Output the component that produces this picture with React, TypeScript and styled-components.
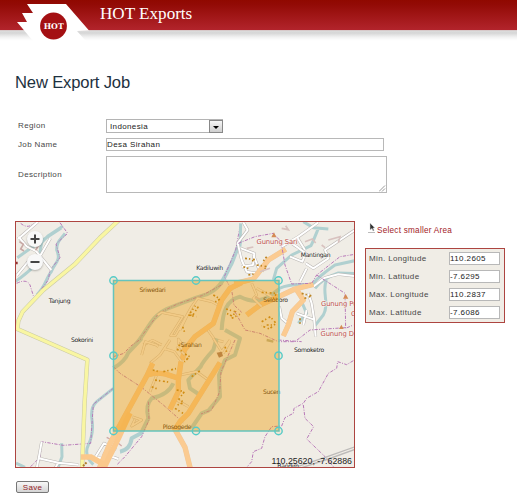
import React from 'react';
import styled, { createGlobalStyle } from 'styled-components';

const Global = createGlobalStyle`
  * { box-sizing: border-box; }
  html, body { margin: 0; padding: 0; background: #fff; overflow: hidden; }
  body { font-family: "Liberation Sans", Arial, sans-serif; font-size: 8px; color: #484848; }
`;

const Page = styled.div`
  width: 517px;
  height: 499px;
  overflow: hidden;
`;

const Header = styled.header`
  height: 41px;
  display: flex;
  align-items: flex-start;
  background:
    linear-gradient(#900800 0, #920a05 4px, #b2242c 30px) 0 0 / 100% 30px no-repeat,
    linear-gradient(#d2b8b8 0, #dcdcdc 1px, #d6d6d6 3px, #f1f1f1 7px, #fdfdfd 10px, #fff 11px) 0 30px / 100% 11px no-repeat;
`;

const Logo = styled.svg`
  width: 100px;
  height: 41px;
  flex: none;
`;

const Brand = styled.div`
  font: 17.1px/20px "Liberation Serif", "Times New Roman", serif;
  color: #fff;
  padding-top: 4px;
`;

const Title = styled.h1`
  margin: 31px 0 0 15px;
  font-size: 16.6px;
  line-height: 22px;
  font-weight: 400;
  color: #1d3140;
  letter-spacing: -0.15px;
`;

const Form = styled.div`
  margin: 25px 0 0 18px;
  display: grid;
  grid-template-columns: 88px 280px;
  grid-template-rows: 14px 13px 37px;
  row-gap: 5px;
  align-items: center;
`;

const Label = styled.label`
  font-size: 8px;
  line-height: 10px;
  letter-spacing: 0.36px;
  color: #484848;
  white-space: nowrap;
`;

const Select = styled.div`
  width: 117px;
  height: 14px;
  border: 1px solid #b4b4b4;
  display: flex;
  justify-content: space-between;
  align-items: center;
  padding-left: 3px;
  letter-spacing: 0.36px;
  color: #222;
`;

const Arrow = styled.span`
  width: 14px;
  height: 13px;
  margin-right: -1px;
  border: 1px solid #888;
  background: linear-gradient(#f6f6f6, #cfcfcf);
  display: flex;
  align-items: center;
  justify-content: center;
  &::after {
    content: '';
    margin-top: 3px;
    border: 3px solid transparent;
    border-top-color: #000;
    border-bottom: 0;
  }
`;

const Field = styled.input<{ $w: number }>`
  appearance: none;
  width: ${(p) => p.$w}px;
  height: 13px;
  border: 1px solid #b8b8b8;
  border-radius: 0;
  padding: 0;
  background: #fff;
  font: 8px/10px "Liberation Sans", Arial, sans-serif;
  letter-spacing: 0.4px;
  color: #222;
  outline: 0;
`;

const AreaBox = styled.div`
  width: 281px;
  height: 37px;
  border: 1px solid #b8b8b8;
  display: flex;
  justify-content: flex-end;
  align-items: flex-end;
`;

const Main = styled.main`
  display: flex;
  margin: 28px 0 0 15px;
`;

const MapFrame = styled.div`
  width: 340px;
  height: 247px;
  border: 1px solid #ad4540;
  background: #f0ede6;
  position: relative;
  flex: none;
`;

const MapSvg = styled.svg`
  display: block;
  width: 338px;
  height: 245px;
`;

const Zoom = styled.div`
  position: absolute;
  left: 11px;
  top: 9px;
  display: flex;
  flex-direction: column;
  gap: 7px;
`;

const ZoomButton = styled.button`
  width: 16px;
  height: 16px;
  border: 0;
  border-radius: 50%;
  background: #f8f8f8;
  box-shadow: 0 1px 2px #0004;
  padding: 0;
  display: flex;
  align-items: center;
  justify-content: center;
`;

const Coordinates = styled.div`
  position: absolute;
  right: 2px;
  bottom: 0;
  font-size: 8.8px;
  line-height: 11px;
  letter-spacing: 0;
  color: #222;
`;

const Side = styled.aside`
  margin-left: 10px;
`;

const AreaLink = styled.a`
  display: flex;
  height: 18px;
  padding-left: 3px;
  gap: 1px;
  color: #a32227;
  font-size: 8.2px;
  letter-spacing: 0.24px;
  line-height: 20px;
  white-space: nowrap;
`;

const Bounds = styled.div`
  margin-top: 9px;
  width: 140px;
  height: 75px;
  border: 1px solid #ad4540;
  background: #f0ede6;
  padding: 3px 4px 0 3px;
  display: grid;
  grid-template-rows: repeat(4, 13px);
  row-gap: 5px;
`;

const BoundRow = styled.div`
  display: flex;
  align-items: center;
  justify-content: space-between;
`;

const Save = styled.button`
  display: block;
  margin: 13px 0 0 16px;
  width: 33px;
  height: 12px;
  padding: 0;
  border: 1px solid #777;
  border-radius: 2px;
  background: linear-gradient(#f7f7f7, #d4d4d4);
  font: 8px/9px "Liberation Sans", Arial, sans-serif;
  letter-spacing: 0.3px;
  color: #96201f;
`;

const Water = styled.path`
  fill: none;
  stroke: #b0d0d0;
  stroke-width: ${(p) => p.strokeWidth ?? 9};
  stroke-linejoin: round;
`;
const Boundary = styled.path`
  fill: none;
  stroke: #b878b8;
  stroke-width: 3;
  stroke-dasharray: 10 4 3 4;
  stroke-linejoin: round;
`;
const Houses = styled.path`
  fill: none;
  stroke: #bd8420;
  stroke-width: 5;
  stroke-dasharray: 6 6 4 8;
`;
const Place = styled.text`
  font: 6.1px "DejaVu Sans", sans-serif;
  letter-spacing: -0.3px;
  fill: #222;
  text-anchor: middle;
  paint-order: stroke;
  stroke: #f5f3ee;
  stroke-width: 1.2px;
`;
const TintedPlace = styled(Place)`
  stroke: none;
  fill: #3c2c18;
`;
const Peak = styled(Place)`
  font-size: 6.8px;
  letter-spacing: -0.1px;
  fill: #c0504d;
  text-anchor: start;
`;

type RoadKind = 'street' | 'main' | 'yellow' | 'lane';
const ROADS: Record<RoadKind, [string, number, string, number]> = {
  street: ['#b9b5b2', 9, '#fff', 6],
  lane: ['#c9bdae', 8, '#f5ece0', 5],
  main: ['#efc79a', 16, '#fbcb91', 14],
  yellow: ['#c9c9a4', 13, '#f9f6a2', 10],
};

function Road({ d, kind = 'street' }: { d: string; kind?: RoadKind }) {
  const [edge, outer, core, inner] = ROADS[kind];
  return (
    <g fill="none" strokeLinejoin="round">
      <path d={d} stroke={edge} strokeWidth={outer} />
      <path d={d} stroke={core} strokeWidth={inner} />
    </g>
  );
}

/* Each map sheet is drawn at three units per pixel from its own corner. */
function Sheet({ x, y, children }: { x: number; y: number; children: React.ReactNode }) {
  return <g transform={`translate(${x} ${y}) scale(0.33333)`}>{children}</g>;
}

const HANDLES = [
  [113.5, 280.5], [196, 280.5], [278.5, 280.5],
  [113.5, 355.7], [278.5, 355.7],
  [113.5, 431], [196, 431], [278.5, 431],
];

function StreetMap() {
  return (
    <MapSvg viewBox="16 222 338 245">
      <Sheet x={10} y={215}>
        <Water d="M15 200C45 180 60 166 85 142L95 82L115 62L158 34M22 128L80 87L155 38M165 55C150 75 140 80 140 105C155 138 132 145 124 170C108 188 108 214 80 240" />
        <Boundary d="M32 25Q50 40 65 30L85 20M150 23L173 55L138 87L150 128L120 165L115 195L82 238M20 205Q50 190 60 210L70 242" />
        <Road d="M24 72L84 20M25 65L50 94L78 108L124 165M20 182L52 143L92 120L121 70" />
        <path d="M28 80l12 8-8 14 10 6M65 88l20 4-8 14" fill="none" stroke="#c8a9a5" strokeWidth="5" />
        <path d="M18 140h5v8h-5z" fill="#903030" />
      </Sheet>

      <Sheet x={10} y={340}>
        <Water d="M310 145L260 185Q240 203 246 240Q252 280 235 315Q220 345 250 374M155 310L156 350L145 380M18 369L45 382" />
        <Boundary d="M310 145L250 193L242 310L160 316L95 305L91 350L62 380" />
        <Road d="M95 305L86 355L145 368L205 374M145 368L135 385M86 355L80 385M256 352L282 310L315 326L290 360L262 352M278 340L325 357" />
        <path d="M290 292l15 8-5 12 15-18M325 310l10 8" stroke="#d0aaa8" strokeWidth="4" fill="none" />
      </Sheet>
      <g transform="translate(10 215) scale(0.33333)">
        <Road kind="yellow" d="M326 16L270 68L195 147L100 225L38 290L25 318L22 342L130 389L232 434L224 560L216 760" />
      </g>

      <Sheet x={120} y={215}>
        <Water strokeWidth={12} d="M45 390C80 355 90 305 140 282C195 260 230 246 260 238C306 218 310 190 335 145L362 75" />
        <Water strokeWidth={12} d="M305 345C308 290 320 255 360 245C400 265 430 262 478 222" />
        <Boundary d="M360 35L347 105L313 185L335 225L342 270L365 292M45 390L116 295L170 268L245 242L308 208" />
        <Road kind="lane" d="M113 300L125 292L188 305L152 362L166 362L215 275L233 250L275 260L298 272M215 275L180 345M175 390L175 372L188 390M70 390L98 376L125 390M225 365L260 340L285 375L310 380" />
        <Road kind="main" d="M187 435L193 405L225 365L280 325L305 255L330 220L365 203" />
        <Houses d="M280 240l20 12-16 10M235 275l-18 28-9-5 18-26M205 300l24 5M188 335l6 17M318 282l28 8-8 14-20-10M335 310l25-12" />
      </Sheet>

      <Sheet x={235} y={215}>
        <Water d="M15 95L17 25M205 20L235 38L280 42M250 40Q234 80 228 92L170 120L125 160L115 195M133 220C180 200 210 215 235 205Q250 185 300 150L360 137M240 220Q262 190 310 174L360 176M275 195C258 225 285 265 265 300L240 332M202 265L215 295L190 325" />
        <Road d="M25 22L38 45L8 84L20 135L35 170L65 175M18 100L58 115L54 150L20 155M55 120L75 170M250 22L190 65L140 95M155 75L185 95L212 115L202 140L165 125M185 65L210 105M212 145L235 160L280 130L270 105L360 45M215 160L195 200M235 215L270 188L310 178L360 183M133 275L140 310L158 325M220 235L230 265L237 310L242 365M185 295L235 313M215 285L205 330" />
        <Road kind="main" d="M-2 206L55 192L100 135L152 103M35 300L75 270L125 248L180 222L235 208M186 226L205 255L172 290L160 330L145 363" />
        <Road kind="lane" d="M50 205L65 240L55 250L80 275M65 220L110 245" />
        <Boundary d="M10 85L60 65L115 55L138 80L150 150L170 207L230 205L245 180L315 125L360 118M245 180L330 235L332 340L355 330M332 338L225 345L180 380L130 380M0 290L30 345L75 355L130 380" />
        <Houses d="M95 125l-12 16M30 130l30 4-16 8M25 155l16 6M65 150l30 5-10 15M40 180l20-4M80 232l45 3-12 18M80 320l26-15 17 20-20 17-24-10M95 330h20M200 235l30 8-24 8M195 310v20" />
        <path d="M35 100l20-4M140 40l20 4-8-12M210 80l22-8 10 12M280 75l35-10-5 18M75 170l30-10M60 245l15 8M260 90l10 8" stroke="#d8c2bf" strokeWidth="5" fill="none" />
        <path d="M109 67L117 52L124 67ZM324 251L332 237L340 251ZM312 342L319 329L326 342Z" fill="#d58a54" />
      </Sheet>

      <Sheet x={120} y={340}>
        <Water strokeWidth={12} d="M-20 85Q15 65 25 38L65 -5M290 -5L280 30Q248 65 242 80L205 120L210 145L240 165M160 130Q145 165 95 175Q75 195 85 235L63 280L35 295Q30 330 0 335M315 -30L360 -5L345 45L315 60L297 105L300 170L265 212L245 220L215 264" />
        <Boundary d="M-20 80L0 100L65 142L130 195L190 248M-20 50L12 40L30 20L65 -5M345 0L303 95L299 155L275 210L243 222M85 185L87 240L65 290L15 350L-10 375" />
        <Road kind="lane" d="M90 70L120 45L150 0M65 45L76 5L108 15L115 20M130 25L163 35L185 65M180 105L230 95L262 118M280 -5L305 35L330 0M310 40L330 5M90 155L110 105M195 45L170 20M37 230L65 240L35 258L45 238M170 180L205 200" />
        <Road kind="main" d="M-62 385L-30 310L82 105L98 70M82 105Q118 92 155 108L175 115L175 155L150 208M175 120L183 65M300 68L205 220L180 245L165 268L195 322L212 390" />
        <path d="M290 38L305 35L309 48L297 53Z" fill="#a07868" />
        <Houses d="M175 15l15 5M170 28l20 6M195 42l14 8-16 16M205 55l-10 4M215 110l25-18M98 90l18 5M130 95l38-9M95 140l20 8M105 120l45 7M170 150l23 5-16 22 14 10-22 10M165 205l24 15M315 20l7 22" />
      </Sheet>

      <Sheet x={235} y={340}>
        <Boundary d="M355 62L335 74L308 65L305 85L280 100L250 155L215 175L205 190L177 205L175 220L150 233L140 258L110 260L90 290L80 325L55 335L50 365L35 382M205 195L210 235L236 260L215 297L270 350L295 380M130 0L200 5" />
        <path d="M358 321L277 350L175 384M358 329L280 357L185 388" stroke="#bcbab8" strokeWidth="4" fill="none" />
        <path d="M95 0L115 5" stroke="#b6b291" strokeWidth="7" fill="none" />
      </Sheet>
      <path d="M81 457L91 457L103 464M103 470L119 437L130 413" stroke="#fbc88b" strokeWidth="5.5" fill="none" />
      <path d="M83 466l4-4" stroke="#ae7c28" strokeWidth="2" strokeDasharray="2 1" />

      <TintedPlace x="152.5" y="292">Sriwedari</TintedPlace>
      <TintedPlace x="191" y="347">Sirahan</TintedPlace>
      <TintedPlace x="177" y="429.3">Plosogede</TintedPlace>
      <TintedPlace x="271.5" y="393.5">Sucen</TintedPlace>
      <TintedPlace x="275.5" y="301.5">Seloboro</TintedPlace>
      <rect x="113.5" y="280.5" width="165.5" height="150.5" fill="#ee9900" fillOpacity=".4" stroke="#65c4bd" strokeWidth="1.5" />
      <g fill="#ee9900" fillOpacity=".08" stroke="#55cbc8" strokeWidth="1.4">
        {HANDLES.map(([x, y]) => <circle key={`${x}-${y}`} cx={x} cy={y} r="3.7" />)}
      </g>

      <Place x="59.5" y="302.7">Tanjung</Place>
      <Place x="82" y="341.7">Sokorini</Place>
      <Place x="209.5" y="269.7">Kadiluwih</Place>
      <Place x="315.5" y="256.9">Mantingan</Place>
      <Place x="309" y="351.7">Somoketro</Place>
      <Place x="288" y="467.5">Bandiro</Place>
      <Peak x="256.5" y="244">Gunung Sari</Peak>
      <Peak x="321" y="306">Gunung Pur</Peak>
      <Peak x="320.5" y="336">Gunung De</Peak>
      <Peak x="351" y="316">G</Peak>
    </MapSvg>
  );
}

const BOUNDS = [
  ['Min. Longitude', '110.2605'],
  ['Min. Latitude', '-7.6295'],
  ['Max. Longitude', '110.2837'],
  ['Max. Latitude', '-7.6086'],
];

export default function App() {
  return (
    <Page>
      <Global />
      <Header>
        <Logo viewBox="0 0 100 41">
          <path d="M27 4H66L89 30.5L77 31L86 41H33L17 22H27L22 13H33Z" fill="#fff" />
          <circle cx="53.5" cy="26" r="13.4" fill="#a41013" />
          <text x="53.7" y="29" textAnchor="middle" fill="#fff" fontFamily="DejaVu Serif, serif" fontSize="7.8" fontWeight="700" textLength="20">HOT</text>
        </Logo>
        <Brand>HOT Exports</Brand>
      </Header>
      <Title>New Export Job</Title>
      <Form>
        <Label>Region</Label>
        <Select>Indonesia<Arrow /></Select>
        <Label>Job Name</Label>
        <Field $w={278} defaultValue="Desa Sirahan" />
        <Label>Description</Label>
        <AreaBox>
          <svg width="7" height="7" viewBox="0 0 7 7"><path d="M0 6.5L6 .5M3 6.5L6 3.5" stroke="#999" /></svg>
        </AreaBox>
      </Form>
      <Main>
        <MapFrame>
          <StreetMap />
          <Zoom>
            <ZoomButton><svg width="10" height="10"><path d="M5 .5V9.5M.5 5H9.5" stroke="#444" strokeWidth="2" /></svg></ZoomButton>
            <ZoomButton><svg width="10" height="10"><path d="M.5 5H9.5" stroke="#444" strokeWidth="2" /></svg></ZoomButton>
          </Zoom>
          <Coordinates>110.25620, -7.62886</Coordinates>
        </MapFrame>
        <Side>
          <AreaLink>
            <svg width="8" height="13" viewBox="0 0 8 13">
              <path d="M0 11.5H7" stroke="#bbb" />
              <path d="M2 2V9L4 7.5L5 10L6.2 9.5L5 7H7Z" fill="#333" stroke="#ddd" strokeWidth=".5" />
            </svg>
            Select smaller Area
          </AreaLink>
          <Bounds>
            {BOUNDS.map(([name, value]) => (
              <BoundRow key={name}>
                <Label>{name}</Label>
                <Field $w={51} defaultValue={value} />
              </BoundRow>
            ))}
          </Bounds>
        </Side>
      </Main>
      <Save>Save</Save>
    </Page>
  );
}
